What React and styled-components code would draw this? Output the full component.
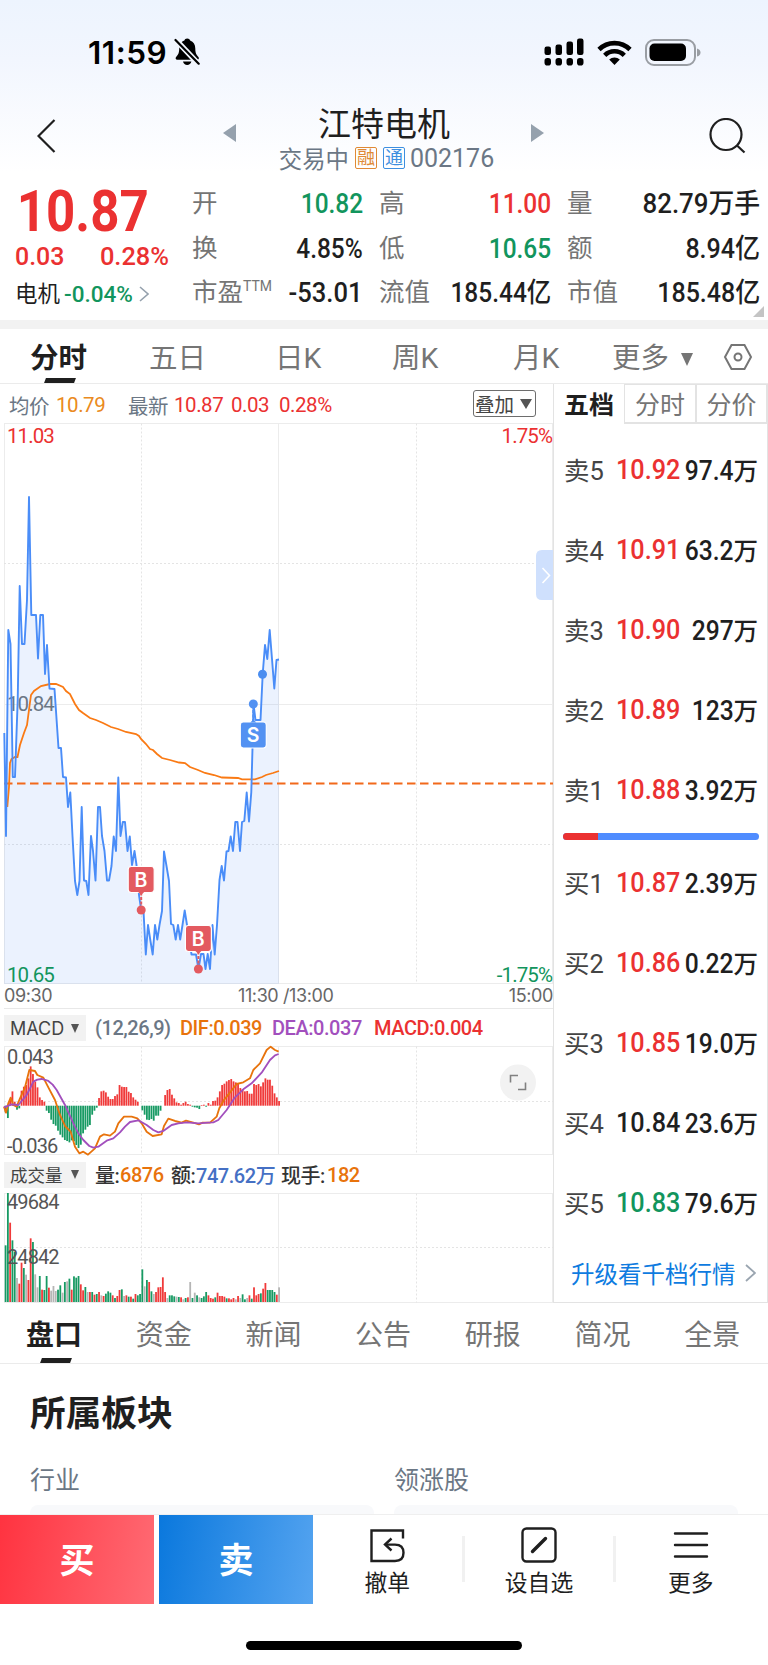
import React from 'react';
import styled, { createGlobalStyle } from 'styled-components';

const RED = '#eb3131';
const GREEN = '#12955d';
const INK = '#1f1f1f';
const GREY = '#757575';
const SLATE = '#6b7785';
const ORANGE = '#e8730c';

const GlobalStyle = createGlobalStyle`
* { box-sizing: border-box; }
body {
margin: 0;
background: #fff;
color: ${INK};
font-family: Roboto, "Noto Sans CJK SC", sans-serif;
}
`;

const Page = styled.div`
display: flex;
flex-direction: column;
width: 768px;
height: 1665px;
overflow: hidden;
background: #fff;
`;

const Header = styled.header`
height: 175px;
flex: none;
background: linear-gradient(#edf4fe, #f2f6fe 60px, #ffffff 172px);
`;

const StatusBar = styled.div`
display: flex;
align-items: center;
height: 104px;
padding: 0 67px 0 88px;
`;

const Clock = styled.span`
font: 600 31.5px/40px Inter, sans-serif;
letter-spacing: 0.5px;
color: #000;
width: 86px;
padding-top: 1px;
white-space: nowrap;
`;

const StatusIcons = styled.div`
display: flex;
align-items: center;
gap: 13px;
margin-left: auto;
`;

const NavBar = styled.div`
display: grid;
grid-template-columns: 223px 1fr 223px;
height: 71px;
`;

const NavSide = styled.div`
padding: ${props => props.pad};
`;

const NavCenter = styled.div`
display: grid;
grid-template-columns: 14px 1fr 14px;
`;

const Arrow = styled.svg`
margin-top: 20px;
fill: #95a1ad;
`;

const Title = styled.div`
text-align: center;
font-size: 33px;
line-height: 42px;
height: 40px;
white-space: nowrap;
`;

const SubTitle = styled.div`
display: flex;
justify-content: center;
align-items: center;
height: 28px;
padding-left: 5px;
font-size: 23.4px;
color: ${SLATE};
`;

const Badge = styled.span`
width: 22px;
height: 22px;
margin-left: 6px;
border: 1px solid ${props => props.color};
border-radius: 2px;
color: ${props => props.color};
font-size: 18px;
line-height: 19px;
text-align: center;
`;

const Code = styled.span`
margin-left: 5px;
font-size: 25px;
`;

const Quote = styled.section`
display: grid;
grid-template-columns: 192px 171px 16px 172px 16px 193px;
flex: none;
height: 145px;
position: relative;
`;

const PriceBox = styled.div`
padding-left: 15px;
color: ${RED};
`;

const BigPrice = styled.div`
font-size: 58px;
font-weight: 700;
line-height: 52px;
height: 60px;
padding: 10px 0 0 2px;
transform: scaleX(0.88);
transform-origin: left;
`;

const Change = styled.div`
display: flex;
justify-content: space-between;
width: 154px;
height: 41px;
font-size: 26.5px;
font-weight: 500;
line-height: 41px;
span { transform: scaleX(0.94); transform-origin: left; }
span:last-child { transform: scaleX(0.96); transform-origin: right; }
`;

const Sector = styled.div`
display: flex;
align-items: center;
font-size: 22.5px;
line-height: 36px;
color: ${INK};
svg { margin-left: 6px; }
`;

const SectorPct = styled.span`
margin-left: 4px;
color: ${GREEN};
font-weight: 500;
`;

const Stats = styled.div`
grid-column: ${props => props.col};
padding-top: 6px;
`;

const Stat = styled.div`
display: flex;
justify-content: space-between;
height: 44.5px;
line-height: 45px;
font-size: 25.5px;
color: ${GREY};
white-space: nowrap;
sup { font-size: 14px; line-height: 0; vertical-align: 10px; }
`;

const StatValue = styled.span`
font-size: 27.5px;
font-weight: 500;
color: ${props => props.color || INK};
transform: scaleX(${props => props.squeeze || 0.89});
transform-origin: right;
`;

const Corner = styled.svg`
position: absolute;
right: 4px;
top: 131px;
`;

const ChartTabs = styled.nav`
display: flex;
flex: none;
height: 64px;
border-top: 9px solid #f2f2f2;
border-bottom: 1px solid #ebebeb;
padding-left: 30px;
align-items: flex-start;
`;

const Tab = styled.div`
display: flex;
flex-direction: column;
align-items: flex-start;
width: ${props => props.w}px;
height: 54px;
font-size: 28.5px;
line-height: 59px;
color: ${props => (props.active ? INK : GREY)};
font-weight: ${props => (props.active ? 700 : 400)};
white-space: nowrap;
`;

const Slant = styled.span`
flex: none;
width: 30px;
height: 5px;
margin: ${props => props.gap};
background: ${INK};
transform: skewX(-20deg);
`;

const Caret = styled.svg`
margin: ${props => props.m || '0'};
fill: ${props => props.fill || '#555'};
`;

const SettingsIcon = styled.svg`
margin-top: 14px;
`;

const Main = styled.main`
display: grid;
grid-template-columns: 553px 215px;
flex: none;
height: 919px;
`;

const Charts = styled.div`
display: flex;
flex-direction: column;
`;

const InfoRow = styled.div`
display: flex;
align-items: center;
height: 39px;
padding: 2px 17px 0 9px;
font-size: 20.5px;
color: ${SLATE};
white-space: nowrap;
`;

const Info = styled.span`
width: ${props => props.w}px;
color: ${props => props.color};
letter-spacing: -0.45px;
`;

const Overlay = styled.div`
display: flex;
align-items: center;
width: 63px;
height: 27px;
margin: -2px 0 0 auto;
padding-left: 1px;
border: 1px solid #6d6d6d;
border-radius: 3px;
font-size: 19.5px;
color: #444;
`;

const TimeAxis = styled.div`
display: grid;
grid-template-columns: 234px auto 1fr;
height: 25px;
margin-left: 4px;
border-bottom: 1px solid #e8e8e8;
font: 18px/24px Inter, sans-serif;
letter-spacing: -0.4px;
color: #666;
span:last-child { text-align: right; }
`;

const IndicatorRow = styled.div`
display: flex;
align-items: center;
height: ${props => props.h}px;
padding: 1px 0 0 4px;
font-size: 20px;
font-weight: 500;
white-space: nowrap;
`;

const Picker = styled.div`
display: flex;
align-items: center;
justify-content: space-between;
width: 82px;
height: 26px;
margin-right: 9px;
padding: 0 7px 0 6px;
background: #f2f2f2;
font-family: Inter, "Noto Sans CJK SC", sans-serif;
font-size: ${props => props.size}px;
font-weight: 400;
color: #444;
`;

const Plot = styled.svg`
display: block;
flex: none;
overflow: visible;
text { letter-spacing: -0.9px; }
`;

const Book = styled.aside`
display: flex;
flex-direction: column;
border: 1px solid #e3e3e3;
border-top: none;
`;

const BookTabs = styled.div`
display: grid;
grid-template-columns: 70px 72px 71px;
flex: none;
height: 40px;
margin-bottom: 6px;
`;

const BookTab = styled.div`
height: 40px;
border: ${props => (props.active ? 'none' : '2px solid #e3e3e3')};
border-width: 1px 1px 2px 1px;
font-size: 25px;
line-height: ${props => (props.active ? 44 : 42)}px;
text-align: center;
color: ${props => (props.active ? INK : GREY)};
font-weight: ${props => (props.active ? 700 : 400)};
`;

const Level = styled.div`
display: grid;
grid-template-columns: 52px 60px 1fr;
align-items: center;
height: 80px;
flex: none;
padding: 0 9px 2px 10px;
white-space: nowrap;
`;

const LevelName = styled.span`
margin-top: -2px;
font-size: 25.5px;
color: #444;
`;

const LevelPrice = styled.span`
font-size: 28px;
font-weight: 500;
color: ${props => props.color};
transform: scaleX(0.9);
transform-origin: left;
`;

const LevelVol = styled.span`
font-size: 24.5px;
font-weight: 500;
text-align: right;
span {
display: inline-block;
font-size: 28px;
transform: scaleX(0.88);
transform-origin: right;
}
`;

const Ratio = styled.div`
display: flex;
flex: none;
height: 7px;
margin: 3px 8px 3px 9px;
border-radius: 4px;
overflow: hidden;
background: #4f8cff;
`;

const RatioBuy = styled.div`
background: ${RED};
`;

const Upgrade = styled.div`
display: flex;
align-items: center;
justify-content: space-between;
height: 59px;
padding: 0 11px 0 17px;
font-size: 23.5px;
color: #0e7be0;
`;

const DetailTabs = styled.nav`
display: grid;
grid-template-columns: repeat(7, 109.7px);
flex: none;
height: 61px;
border-bottom: 1px solid #ebebeb;
`;

const DetailTab = styled(Tab)`
width: auto;
height: 60px;
padding-left: 26px;
line-height: 65px;
font-size: 28px;
`;

const Section = styled.section`
flex: none;
height: 150px;
padding: 21px 30px 0;
overflow: hidden;
`;

const SectionTitle = styled.h2`
margin: 0;
height: 55px;
font-size: 35.7px;
line-height: 59px;
font-weight: 700;
`;

const SectorGrid = styled.div`
display: grid;
grid-template-columns: 344px 344px;
column-gap: 20px;
margin-top: 23px;
font-size: 25px;
line-height: 35px;
color: ${SLATE};
`;

const SectorCard = styled.div`
height: 20px;
margin-top: 7px;
border-radius: 8px 8px 0 0;
background: #f8f9fb;
`;

const ActionBar = styled.footer`
display: flex;
flex: none;
height: 91px;
padding-right: 3px;
border-top: 1px solid #efefef;
background: #fff;
`;

const TradeButton = styled.button`
width: 154px;
height: 89px;
margin: 0 ${props => (props.buy ? 5 : 0)}px 0 0;
padding: 0 0 4px;
border: none;
font: 700 35px/85px "Noto Sans CJK SC", sans-serif;
color: #fff;
background: ${props => (props.buy
    ? 'linear-gradient(100deg, #ff3340, #ff6b74)'
    : 'linear-gradient(100deg, #0a78dd, #55a4f0)')};
`;

const Action = styled.div`
display: flex;
flex-direction: column;
align-items: center;
flex: 1;
padding-top: 12px;
font-size: 22.8px;
line-height: 38px;
`;

const Divider = styled.i`
width: 3px;
height: 46px;
margin-top: 21px;
background: #f1f1f1;
`;

const HomeIndicator = styled.div`
width: 276px;
height: 9px;
margin: 36px auto 0;
border-radius: 5px;
background: #000;
`;

const stats = [
  { col: 2, rows: [['开', '10.82', GREEN], ['换', '4.85%'], ['市盈', '-53.01', INK, 0.93]] },
  { col: 4, rows: [['高', '11.00', RED], ['低', '10.65', GREEN], ['流值', '185.44亿']] },
  { col: 6, rows: [['量', '82.79万手', INK, 0.94], ['额', '8.94亿', INK, 0.91], ['市值', '185.48亿', INK, 0.91]] },
];

const asks = [
  ['卖5', '10.92', RED, '97.4'],
  ['卖4', '10.91', RED, '63.2'],
  ['卖3', '10.90', RED, '297'],
  ['卖2', '10.89', RED, '123'],
  ['卖1', '10.88', RED, '3.92'],
];

const bids = [
  ['买1', '10.87', RED, '2.39'],
  ['买2', '10.86', RED, '0.22'],
  ['买3', '10.85', RED, '19.0'],
  ['买4', '10.84', INK, '23.6'],
  ['买5', '10.83', GREEN, '79.6'],
];

const priceLine = '4.3,733 6,836 8.3,630 10.5,644 12.8,777 15,777 17.7,700 19.7,586 22,644 24.5,644 27,600 29,497 31.3,615 36,615 38,658.5 40.3,615 43,615 45,674 47,645 49.5,688.5 54.5,689 58.5,748 61,748 63,777 66,777.5 68,807 70.3,792.5 72.5,836 75,881 77.3,895 79.5,881 81.7,807 84,880.5 86.3,881 88.5,895 91,836 93,851 95.5,880.5 98,807 100,807 102,836 104.5,851 107,880.5 109,880.5 111.5,866 113.7,836.5 116,851 118.3,777.5 120.5,836 122.8,822 125,822 127.5,851 129.8,836.5 132,865 134.5,851 136.5,865 139,895 141.2,910 143.5,911 145.8,954.5 148,925 150.3,940 152.7,954.5 155,925 157.3,939.5 159.5,925 162,911 164,851.5 166.5,866 169,881 171,924 173.3,925 175.7,939.5 178,925 180.2,939.5 182.5,925 184.7,910.5 187,925 189.5,940 191.5,954.5 196,954.5 198.5,969 201,954 203.5,954 205.5,969 207.7,954 210,969 212.5,925 214.7,954.5 217,925 219.5,880 221.7,866 224,880.5 226.5,851.5 228.5,851 230.7,836.5 233,851 235.3,822 237.5,822 240,851 242,822 244.3,821 246.7,792.5 249,821.5 251.3,792 252.5,748 253.5,704 255.5,720 258,720 260.5,720 262.7,674 265,645 267.3,659 269.7,630 272,659 274.3,688.5 276.5,660 279,659.5';

const avgLine = '7.3,807 9,787 10,763 11.5,759 15,757 17.5,757 20,745 24,733 27,725 29.5,706 31,695 34,691 41,686 50,684 56,684 63,687 66,691 70,694 75,704 79,710 83,713 90,718 96,720 103,723 111,727 118,729 126,732 136,734 139,736 141,739 146,744 150,749 153,750 157,754 162,758 170,760 179,762.5 185,763 190,767 198,770 205,773 214,775 222,777.5 238,778 242,779.3 255,779.3 262,777 266,775 273,773 279,771';

const macdBars = [
  -20, -37, 17, 43, 12, -12, -8, 45, 57, 62, 82, 118, 95, 72, 55, 25, 17, 12, -15, -22,
  -42, -55, -60, -75, -87, -95, -103, -106, -110, -104, -107, -118, -127, -117, -83, -72, -63, -58, -27, -15,
  -6, 23, 43, 45, 40, 27, 20, 20, 29, 34, 62, 57, 56, 56, 42, 38, 25, 18, 12, 0,
  -14, -27, -42, -43, -40, -45, -30, -30, -15, 0, 32, 47, 50, 33, 22, 10, 8, 3, 8, 12,
  5, 3, -3, -5, -6, -10, 2, 3, -3, 8, 3, 14, 15, 25, 43, 62, 66, 73, 77, 80,
  73, 70, 65, 53, 50, 43, 44, 36, 36, 65, 62, 65, 58, 70, 82, 78, 78, 60, 37, 25, 14,
];

const difLine = '12,320 18,338 25,310 32,293 40,315 50,320 60,295 75,262 88,210 105,213 112,225 130,233 145,262 165,300 180,345 195,378 212,395 225,440 238,460 250,455 264,464 285,445 300,410 312,403 330,407 345,395 355,370 372,350 395,350 412,355 425,370 440,395 458,408 485,403 492,378 505,356 525,363 545,368 558,362 580,368 597,373 608,368 630,368 650,350 658,325 672,300 688,280 710,252 730,247 750,235 760,210 780,190 800,150 812,140 825,150 836,155';

const deaLine = '12,322 35,313 55,315 80,285 100,245 112,239 125,237 145,243 158,254 170,270 195,315 220,370 235,400 250,420 268,438 280,443 295,440 320,422 340,415 360,397 375,380 390,366 415,361 440,375 460,390 475,397 490,393 515,375 535,370 560,367 595,370 625,368 640,367 655,360 680,330 705,292 730,268 755,250 785,218 810,180 825,166 836,162';

// colour letter + height
const volBars = 'g170 g327 r238 g185 g150 x72 r55 r118 g102 x82 r66 r191 g180 x83 x44 g78 r37 g36 g78 r43 x34 x48 x33 g37 g50 x28 g60 x62 g70 r37 g77 g73 g78 r53 r35 g45 x30 r30 g30 r22 g24 r30 x20 r18 g25 g32 g28 r20 g12 r18 r36 g38 x18 r20 g16 r16 g10 r24 g20 g24 g98 x47 g66 r60 g32 x24 r30 r44 r45 r74 r30 x12 g20 g20 g17 x16 g15 r14 x8 g12 r14 x60 g12 x28 g20 x14 g12 g17 g30 r20 r12 r10 g14 r28 r18 r18 r16 g11 r11 r8 r12 x8 r18 x12 g23 g8 x12 r20 g10 r44 r20 r24 g26 r40 r57 g36 g36 g36 g30 r22 x44'.split(' ');

const barColors = { g: '#179a63', r: '#f03a3a', x: '#b5b5b5' };

const Grid = ({ top, bottom, mids, solid }) => (
  <g stroke="#ececec" strokeWidth="1" fill="none">
    <path d={`M4 ${top}H553M4 ${bottom}H553M4.5 ${top}V${bottom}M278.5 ${top}V${bottom}M552.5 ${top}V${bottom}`} />
    {solid && <path d={`M4 ${solid}H553`} />}
    <path stroke="#e4e4e4" strokeDasharray="2 2" d={mids.map(y => `M4 ${y}H553`).join('') + `M141.5 ${top}V${bottom}M416.5 ${top}V${bottom}`} />
  </g>
);

const Marker = ({ x, y, dotY, letter, color, up }) => (
  <g>
    <path d={up ? `M${x} ${y}V${dotY}` : `M${x} ${y + 26}V${dotY}`} stroke={color} strokeWidth="2" strokeDasharray="3 1.5" />
    <circle cx={x} cy={dotY} r="4.5" fill={color} />
    <rect x={x - 13} y={y} width="26" height="26" rx="3" fill={color} stroke="#fff" strokeWidth="1.2" />
    <path d={up ? `M${x - 3} ${y + 0.6}l3 -3l3 3z` : `M${x - 3} ${y + 25.4}l3 3l3 -3z`} fill={color} />
    <text x={x - 0.6} y={y + 20} textAnchor="middle" fontFamily="Inter" fontSize="19.5" fontWeight="600" fill="#fff">{letter}</text>
  </g>
);

const PricePlot = () => (
  <Plot width="553" height="561" viewBox="0 423 553 561" fontSize="20.500" fontFamily="Roboto">
    <Grid top={423.5} bottom={983.5} mids={[563.5, 844.5]} solid={704.5} />
    <polygon points={`4,984 ${priceLine} 279,984`} fill="#4c8bf5" fillOpacity="0.11" />
    <text x="7" y="711" fill={SLATE}>10.84</text>
    <path d="M4 783.5H553" stroke="#f2691b" strokeWidth="2" strokeDasharray="8.5 4.5" />
    <polyline points={avgLine} fill="none" stroke="#fa7a14" strokeWidth="1.8" />
    <polyline points={priceLine} fill="none" stroke="#4a8df8" strokeWidth="1.9" strokeLinejoin="round" />
    <text x="7" y="443" fill={RED}>11.03</text>
    <text x="552" y="443" fill={RED} textAnchor="end">1.75%</text>
    <text x="7" y="982" fill={GREEN}>10.65</text>
    <text x="552" y="982" fill={GREEN} textAnchor="end">-1.75%</text>
    <circle cx="262.5" cy="674.3" r="4.5" fill="#4a8df0" />
    <Marker x={253.3} y={722} dotY={704} letter="S" color="#5392f2" up />
    <Marker x={141.2} y={866.5} dotY={910} letter="B" color="#e35a60" />
    <Marker x={198.4} y={925.5} dotY={969} letter="B" color="#e35a60" />
    <path d="M553 550H542q-6 0 -6 6V594q0 6 6 6H553z" fill="#cfe0fd" />
    <path d="M542.500 568l7 7.500l-7 7.500" fill="none" stroke="#fff" strokeWidth="1.6" />
  </Plot>
);

const MacdPlot = () => (
  <Plot width="553" height="109" viewBox="0 1046 553 109" fontSize="20" fontFamily="Roboto">
    <Grid top={1046.5} bottom={1154.5} mids={[1101.5]} />
    {macdBars.map((v, i) => (
      <rect key={i} x={4.7 + i * 2.279} width="1.8" y={v > 0 ? 1105.7 - v / 3 : 1105.7} height={Math.abs(v) / 3} fill={v > 0 ? barColors.r : barColors.g} />
    ))}
    <g transform="translate(0 1000) scale(0.3333)" fill="none" strokeWidth="5.5" strokeLinejoin="round">
      <polyline points={difLine} stroke={ORANGE} />
      <polyline points={deaLine} stroke="#a24fbd" />
    </g>
    <text x="7" y="1064" fill="#555">0.043</text>
    <text x="7" y="1153" fill="#555">-0.036</text>
    <circle cx="518" cy="1082.500" r="18" fill="#f2f2f2" />
    <path d="M510.500 1082.500V1075.500H518M525.500 1082.500V1089.500H518" fill="none" stroke="#808080" strokeWidth="1.600" />
  </Plot>
);

const VolumePlot = () => (
  <Plot width="553" height="110" viewBox="0 1193 553 110" fontSize="20" fontFamily="Roboto">
    <Grid top={1193.5} bottom={1302.5} mids={[1247.5]} />
    {volBars.map((b, i) => (
      <rect key={i} x={4.7 + i * 2.279} width="1.8" y={1302 - b.slice(1) / 3} height={b.slice(1) / 3} fill={barColors[b[0]]} />
    ))}
    <text x="7" y="1209" fill="#555">49684</text>
    <text x="7" y="1263.500" fill="#555">24842</text>
  </Plot>
);

const Levels = ({ rows }) => rows.map(([name, price, color, vol]) => (
  <Level key={name}>
    <LevelName>{name}</LevelName>
    <LevelPrice color={color}>{price}</LevelPrice>
    <LevelVol><span>{vol}</span>万</LevelVol>
  </Level>
));

const Chevron = ({ w, h, color, sw }) => (
  <svg width={w} height={h} viewBox={`0 0 ${w} ${h}`} fill="none" stroke={color} strokeWidth={sw}>
    <path d={`M1 1L${w - 1} ${h / 2}L1 ${h - 1}`} />
  </svg>
);

export default function App() {
  return (
    <Page>
      <GlobalStyle />
      <Header>
        <StatusBar>
          <Clock>11:59</Clock>
          <svg width="26" height="28" viewBox="0 0 26 28">
            <path d="M13.200 0.500c-1.600 0-2.500.8-2.800 2C6.800 3.700 5.200 6.800 5.200 10.500c0 5-1.200 6.300-2.900 8.200-1.300 1.500-.6 3 1 3h19.900c1.600 0 2.300-1.500 1-3-1.700-1.900-2.900-3.200-2.900-8.200 0-3.700-1.700-6.800-5.200-8-.3-1.200-1.300-2-2.900-2zM9 23.500c.5 2.200 2.200 3.600 4.200 3.600s3.700-1.400 4.200-3.600z" />
            <path d="M1.500 1.500L25 26.500" stroke="#f3f7fe" strokeWidth="5.500" />
            <path d="M1.500 2L24.700 25.700" stroke="#000" strokeWidth="2.200" strokeLinecap="round" />
          </svg>
          <StatusIcons>
            <svg width="40" height="28" viewBox="0 0 40 28">
              <rect x="0.500" y="8.500" width="6.500" height="8.500" rx="2.200" />
              <rect x="11.500" y="6.500" width="6.500" height="10.500" rx="2.200" />
              <rect x="22.500" y="3.500" width="6.500" height="13.500" rx="2.200" />
              <rect x="33" y="0.500" width="6.500" height="16.500" rx="2.200" />
              <rect x="0.500" y="20" width="6.500" height="7.500" rx="2.800" />
              <rect x="11.500" y="20" width="6.500" height="7.500" rx="2.800" />
              <rect x="22.500" y="20" width="6.500" height="7.500" rx="2.800" />
              <rect x="33" y="20" width="6.500" height="7.500" rx="2.800" />
            </svg>
            <svg width="35" height="25" viewBox="0 0 35 25" fill="none" stroke="#000" strokeWidth="4.600">
              <path d="M2 9.500a22 22 0 0 1 31 0" />
              <path d="M7.700 15.300a14 14 0 0 1 19.600 0" />
              <path d="M17.500 25l-5.300-5.400a7.600 7.600 0 0 1 10.600 0z" fill="#000" stroke="none" />
            </svg>
            <svg width="56" height="27" viewBox="0 0 56 27">
              <rect x="1" y="1" width="49" height="25" rx="8" fill="none" stroke="#999da3" strokeWidth="2" />
              <rect x="4.500" y="4.500" width="36.500" height="17.500" rx="5" />
              <path d="M52 9.500q3.500 1 3.500 4t-3.500 4z" fill="#999da3" />
            </svg>
          </StatusIcons>
        </StatusBar>
        <NavBar>
          <NavSide pad="15px 0 0 37px">
            <svg width="19" height="34" viewBox="0 0 19 34" fill="none" stroke={INK} strokeWidth="2.200"><path d="M17.500 1L1.500 17l16 16" /></svg>
          </NavSide>
          <NavCenter>
            <Arrow width="13" height="18"><path d="M13 0V18L0 9z" /></Arrow>
            <div>
              <Title>江特电机</Title>
              <SubTitle>
                交易中<Badge color="#e08a35">融</Badge><Badge color="#3d8fe0">通</Badge><Code>002176</Code>
              </SubTitle>
            </div>
            <Arrow width="13" height="18"><path d="M0 0V18L13 9z" /></Arrow>
          </NavCenter>
          <NavSide pad="14px 0 0 164px">
            <svg width="38" height="38" viewBox="0 0 38 38" fill="none" stroke={INK} strokeWidth="2.200">
              <circle cx="17" cy="16.500" r="15.500" /><path d="M28 27.500l7.500 7" />
            </svg>
          </NavSide>
        </NavBar>
      </Header>

      <Quote>
        <PriceBox>
          <BigPrice>10.87</BigPrice>
          <Change><span>0.03</span><span>0.28%</span></Change>
          <Sector>电机<SectorPct>-0.04%</SectorPct><Chevron w={10} h={16} color="#95a1ad" sw={1.6} /></Sector>
        </PriceBox>
        {stats.map(group => (
          <Stats col={group.col} key={group.col}>
            {group.rows.map(([label, value, color, squeeze]) => (
              <Stat key={label}>
                <span>{label}{label === '市盈' && <sup>TTM</sup>}</span>
                <StatValue color={color} squeeze={squeeze}>{value}</StatValue>
              </Stat>
            ))}
          </Stats>
        ))}
        <Corner width="11" height="11"><path d="M11 0V11H0z" fill="#c4c4c4" /></Corner>
      </Quote>

      <ChartTabs>
        <Tab w={119} active>分时<Slant gap="-10px 0 0 15px" /></Tab>
        <Tab w={126}>五日</Tab>
        <Tab w={117}>日K</Tab>
        <Tab w={121}>周K</Tab>
        <Tab w={99}>月K</Tab>
        <Tab w={68}>更多</Tab>
        <Caret width="12" height="13" m="24px 30px 0 1px" fill={GREY}><path d="M0 0H12L6 13z" /></Caret>
        <SettingsIcon width="30" height="28" viewBox="0 0 30 28" fill="none" stroke={GREY} strokeWidth="2">
          <path d="M8.500 2H21.500L28 14L21.500 26H8.500L2 14z" /><circle cx="15" cy="14" r="3.500" />
        </SettingsIcon>
      </ChartTabs>

      <Main>
        <Charts>
          <InfoRow>
            <Info w={47}>均价</Info>
            <Info w={72} color="#ea8a20">10.79</Info>
            <Info w={46}>最新</Info>
            <Info w={57} color={RED}>10.87</Info>
            <Info w={48} color={RED}>0.03</Info>
            <Info w={60} color={RED}>0.28%</Info>
            <Overlay>叠加<Caret width="12" height="10" m="0 0 0 6px"><path d="M0 0H12L6 10z" /></Caret></Overlay>
          </InfoRow>
          <PricePlot />
          <TimeAxis><span>09:30</span><span>11:30 /13:00</span><span>15:00</span></TimeAxis>
          <IndicatorRow h={37}>
            <Picker size={18}>MACD<Caret width="8" height="9"><path d="M0 0H8L4 9z" /></Caret></Picker>
            <Info w={85} color={SLATE}>(12,26,9)</Info>
            <Info w={92} color={ORANGE}>DIF:0.039</Info>
            <Info w={102} color="#a24fbd">DEA:0.037</Info>
            <Info w={120} color={RED}>MACD:0.004</Info>
          </IndicatorRow>
          <MacdPlot />
          <IndicatorRow h={38}>
            <Picker size={17.500}>成交量<Caret width="8" height="9"><path d="M0 0H8L4 9z" /></Caret></Picker>
            <Info w={25} color="#333">量:</Info>
            <Info w={51} color={ORANGE}>6876</Info>
            <Info w={25} color="#333">额:</Info>
            <Info w={85} color="#4570c4">747.62万</Info>
            <Info w={46} color="#333">现手:</Info>
            <Info w={40} color={ORANGE}>182</Info>
          </IndicatorRow>
          <VolumePlot />
        </Charts>

        <Book>
          <BookTabs>
            <BookTab active>五档</BookTab>
            <BookTab>分时</BookTab>
            <BookTab>分价</BookTab>
          </BookTabs>
          <Levels rows={asks} />
          <Ratio><RatioBuy style={{ width: '17.8%' }} /></Ratio>
          <Levels rows={bids} />
          <Upgrade>升级看千档行情<Chevron w={11} h={18} color="#9aa5b0" sw={1.8} /></Upgrade>
        </Book>
      </Main>

      <DetailTabs>
        <DetailTab active>盘口<Slant gap="-10px 0 0 15px" /></DetailTab>
        {['资金', '新闻', '公告', '研报', '简况', '全景'].map(t => <DetailTab key={t}>{t}</DetailTab>)}
      </DetailTabs>

      <Section>
        <SectionTitle>所属板块</SectionTitle>
        <SectorGrid>
          <div>行业<SectorCard /></div>
          <div>领涨股<SectorCard /></div>
        </SectorGrid>
      </Section>

      <ActionBar>
        <TradeButton buy>买</TradeButton>
        <TradeButton>卖</TradeButton>
        <Action>
          <svg width="36" height="38" viewBox="0 0 36 38" fill="none" stroke={INK} strokeWidth="2.400">
            <path d="M34 11.500V3.500H2.500V34H26q8.500 0 8.500-8.200t-8.500-8.200H17" /><path d="M22.500 11.500l-6.500 6l6.500 6" />
          </svg>
          撤单
        </Action>
        <Divider />
        <Action>
          <svg width="36" height="38" viewBox="0 0 36 38" fill="none" stroke={INK} strokeWidth="2.400">
            <rect x="1.500" y="1.500" width="33" height="33" rx="4" /><path d="M11.500 24.500L24.500 11.500" strokeWidth="3.400" strokeLinecap="round" />
          </svg>
          设自选
        </Action>
        <Divider />
        <Action>
          <svg width="36" height="38" viewBox="0 0 36 38" fill="none" stroke={INK} strokeWidth="2.400" strokeLinecap="round">
            <path d="M2 6.500H34M2 18H34M2 29.500H34" />
          </svg>
          更多
        </Action>
      </ActionBar>
      <HomeIndicator />
    </Page>
  );
}
